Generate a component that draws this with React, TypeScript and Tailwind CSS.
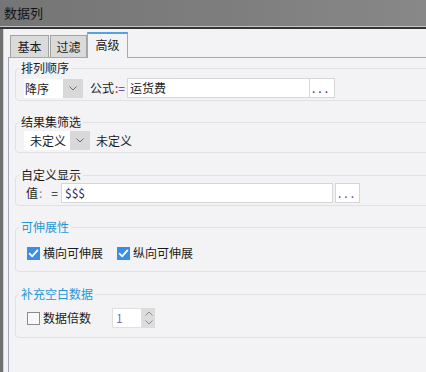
import React from "react";

const Chevron = () => (
  <svg width="8" height="5" viewBox="0 0 8 5" className="block">
    <path d="M0.5 0.5 L4 4 L7.5 0.5" fill="none" stroke="#6a6a6a" strokeWidth="1" />
  </svg>
);

const Check = () => (
  <svg width="13" height="13" viewBox="0 0 13 13" className="block">
    <path d="M2.6 6.6 L5.2 9.3 L10.4 3.4" fill="none" stroke="#ffffff" strokeWidth="1.8" strokeLinecap="round" strokeLinejoin="round" />
  </svg>
);

function Legend({ children, blue }: { children: React.ReactNode; blue?: boolean }) {
  return (
    <legend className={"ml-[3px] px-[2px] leading-[14px] " + (blue ? "text-[#1e98d8]" : "text-[#1b1b1b]")}>
      {children}
    </legend>
  );
}

export default function App() {
  return (
    <div className="w-[426px] h-[372px] overflow-hidden bg-[#f3f3f5] flex flex-col text-[12px] text-[#1b1b1b] font-['Noto_Sans_CJK_SC',sans-serif]">
      {/* title bar */}
      <div className="h-[26px] shrink-0 bg-linear-to-r from-[#757575] via-[#7d7d7d] to-[#888888] pl-[4px] pt-[5px] text-[13px] leading-[16px] text-[#141414]">
        数据列
      </div>
      <div className="h-px shrink-0 bg-[#c6c6c6]" />
      <div className="h-[2px] shrink-0 bg-[#353535]" />

      <div className="flex flex-1 min-h-0">
        <div className="w-[3px] shrink-0 bg-[#6f6f6f]" />
        <div className="w-px shrink-0 bg-[#d2d2d2]" />
        <div className="flex-1 min-w-0 pl-[4px] flex flex-col">
          {/* tabs */}
          <div className="h-[28px] shrink-0 flex items-end pl-[2px]">
            <div className="w-[39px] h-[22px] border border-b-0 border-[#a2a2a2] bg-[#dadada] text-center pt-[4px] leading-[14px]">
              基本
            </div>
            <div className="ml-px w-[37px] h-[22px] border border-b-0 border-[#a2a2a2] bg-[#dadada] text-center pt-[4px] leading-[14px]">
              过滤
            </div>
            <div className="relative z-10 -mb-px w-[41px] h-[26px] border-x border-[#a4a9b8] border-t-2 border-t-[#58a0e6] bg-[#f3f3f5] text-center pt-[4px] leading-[14px]">
              高级
            </div>
          </div>

          {/* tab panel */}
          <div className="flex-1 w-[480px] border-t border-l border-[#a4a9b8] pl-[6px] pt-[3px] flex flex-col">
            {/* 排列顺序 */}
            <fieldset className="border border-[#e1e1e3] rounded-[4px] pb-[2px]">
              <Legend>排列顺序</Legend>
              <div className="mt-[3px] h-[20px] flex items-center ml-[8px]">
                <div className="flex h-[19px]">
                  <div className="w-[39px] bg-white pl-[1px] leading-[19px]">降序</div>
                  <div className="w-[20px] bg-[#d8d8d8] flex items-center justify-center">
                    <Chevron />
                  </div>
                </div>
                <div className="ml-[7px] w-[37px] flex items-center leading-[20px]">
                  <span>公式</span>
                  <span className="text-[#8b1e1e] ml-px">:</span>
                  <span className="text-[#5a2d9a]">=</span>
                </div>
                <div className="w-[183px] h-[20px] bg-white border border-[#d6d6d6] pl-[2px] leading-[18px]">
                  运货费
                </div>
                <div className="w-[25px] h-[20px] bg-white border border-l-0 border-[#d6d6d6] pl-[2px] leading-[18px] tracking-[3px] text-[#4a2a2a]">
                  ...
                </div>
              </div>
            </fieldset>

            {/* 结果集筛选 */}
            <fieldset className="mt-[14px] border border-[#e1e1e3] rounded-[4px] pb-[2px]">
              <Legend>结果集筛选</Legend>
              <div className="mt-[2px] h-[19px] flex items-center ml-[8px]">
                <div className="flex h-[19px]">
                  <div className="w-[46px] bg-white pl-[6px] leading-[19px]">未定义</div>
                  <div className="w-[20px] bg-[#d8d8d8] flex items-center justify-center">
                    <Chevron />
                  </div>
                </div>
                <span className="ml-[6px] leading-[19px]">未定义</span>
              </div>
            </fieldset>

            {/* 自定义显示 */}
            <fieldset className="mt-[15px] border border-[#e1e1e3] rounded-[4px] pb-[2px]">
              <Legend>自定义显示</Legend>
              <div className="mt-[1px] h-[20px] flex items-center ml-[10px]">
                <div className="w-[35px] flex items-center leading-[20px]">
                  <span>值</span>
                  <span className="text-[#8a8a8a] ml-px">:</span>
                  <span className="ml-[9px]">=</span>
                </div>
                <div className="w-[272px] h-[20px] bg-white border border-[#d6d6d6] pl-[3px] leading-[18px] text-[#2e2a6e]">
                  $$$
                </div>
                <div className="ml-[2px] w-[25px] h-[20px] bg-white border border-[#d6d6d6] pl-[2px] leading-[18px] tracking-[3px] text-[#8a1fa8]">
                  ...
                </div>
              </div>
            </fieldset>

            {/* 可伸展性 */}
            <fieldset className="mt-[14px] border border-[#e1e1e3] rounded-[4px] pb-[8px]">
              <Legend blue>可伸展性</Legend>
              <div className="mt-[9px] h-[20px] flex items-center ml-[11px]">
                <div className="w-[13px] h-[13px] bg-[#3b8ee6]">
                  <Check />
                </div>
                <span className="ml-[3px] leading-[20px]">横向可伸展</span>
                <div className="ml-[14px] w-[13px] h-[13px] bg-[#3b8ee6]">
                  <Check />
                </div>
                <span className="ml-[3px] leading-[20px]">纵向可伸展</span>
              </div>
            </fieldset>

            {/* 补充空白数据 */}
            <fieldset className="mt-[15px] border border-[#e1e1e3] rounded-[4px] pb-[9px]">
              <Legend blue>补充空白数据</Legend>
              <div className="mt-[7px] h-[20px] flex items-center ml-[11px]">
                <div className="w-[13px] h-[13px] border border-[#8c8c8c] bg-[#f8f8f8]" />
                <span className="ml-[3px] leading-[20px]">数据倍数</span>
                <div className="ml-[21px] flex h-[20px]">
                  <div className="w-[30px] bg-white border border-[#e0e0e0] pl-[3px] leading-[18px] text-[#7a78a8]">
                    1
                  </div>
                  <div className="w-[13px] bg-[#dcdcdc] flex flex-col items-center justify-center gap-[4px]">
                    <svg width="8" height="5" viewBox="0 0 8 5" className="block">
                      <path d="M0.5 4.5 L4 1 L7.5 4.5" fill="none" stroke="#8a8a8a" strokeWidth="1" />
                    </svg>
                    <svg width="8" height="5" viewBox="0 0 8 5" className="block">
                      <path d="M0.5 0.5 L4 4 L7.5 0.5" fill="none" stroke="#8a8a8a" strokeWidth="1" />
                    </svg>
                  </div>
                </div>
              </div>
            </fieldset>
          </div>
        </div>
      </div>
    </div>
  );
}
